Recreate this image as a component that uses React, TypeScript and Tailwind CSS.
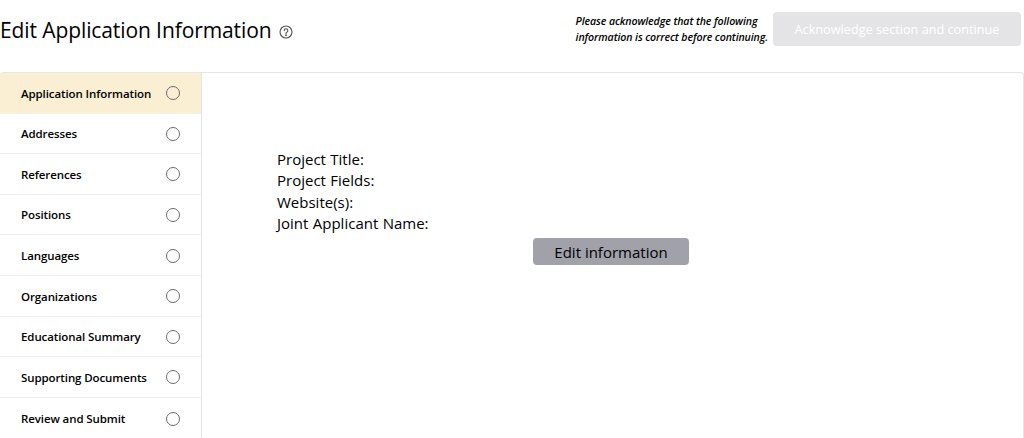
import React from "react";

const sections = [
  "Application Information",
  "Addresses",
  "References",
  "Positions",
  "Languages",
  "Organizations",
  "Educational Summary",
  "Supporting Documents",
  "Review and Submit",
];

const fields = ["Project Title:", "Project Fields:", "Website(s):", "Joint Applicant Name:"];

const HelpIcon = () => (
  <svg width="14" height="14" viewBox="0 0 14 14" fill="none" stroke="#555555" strokeWidth="1.1" className="mt-[3px]">
    <circle cx="7" cy="7" r="6" />
    <path d="M5.2 5.6a1.8 1.8 0 1 1 2.8 1.5c-.7.4-1 .7-1 1.4" strokeLinecap="round" />
    <circle cx="7" cy="10.2" r="0.4" fill="#555555" />
  </svg>
);

export default function App() {
  return (
    <div className="h-[438px] w-[1024px] overflow-hidden bg-white text-black [font-family:'Open_Sans','Noto_Sans',sans-serif]">
      <header className="flex h-[72px] items-start justify-between pr-[3px]">
        <div className="flex items-center gap-[8px] pt-[15px]">
          <h1 className="text-[21px] leading-[30px] font-normal tracking-[-0.1px] whitespace-nowrap">
            Edit Application Information
          </h1>
          <HelpIcon />
        </div>
        <div className="flex items-start gap-[5px] pt-[12px]">
          <p className="pt-[1px] text-[10.6px] leading-[16px] font-semibold italic whitespace-nowrap tracking-[-0.1px]">
            Please acknowledge that the following
            <br />
            information is correct before continuing.
          </p>
          <button className="h-[34px] w-[248px] rounded-[4px] bg-[#e4e4e7] pt-[2px] text-[12.7px] text-white whitespace-nowrap">
            Acknowledge section and continue
          </button>
        </div>
      </header>
      <div className="flex h-[366px] rounded-t-[4px] border border-b-0 border-l-0 border-[#e5e5e5]">
        <nav className="w-[202px] shrink-0 border-r border-[#e5e5e5]">
          {sections.map((name, i) => (
            <div
              key={name}
              className={`flex h-[40.6px] items-center justify-between border-b border-[#f0f0f0] pt-[1px] pr-[21.5px] pl-[21px] last:border-b-0 ${
                i === 0 ? "bg-[#fbefd3]" : "bg-white"
              }`}
            >
              <span className="text-[11.5px] font-semibold tracking-[-0.1px] whitespace-nowrap">{name}</span>
              <span className="h-[14px] w-[14px] rounded-full border border-[#6b6b70]" />
            </div>
          ))}
        </nav>
        <main className="flex-1 pt-[76px] pl-[75px]">
          <div className="text-[15px] leading-[21.3px] [word-spacing:0.5px]">
            {fields.map((f) => (
              <div key={f}>{f}</div>
            ))}
          </div>
          <div className="mt-[4px] ml-[256px]">
            <button className="h-[27px] w-[156px] rounded-[4px] bg-[#a1a1aa] pt-[1px] text-[15px] text-black">
              Edit information
            </button>
          </div>
        </main>
      </div>
    </div>
  );
}
